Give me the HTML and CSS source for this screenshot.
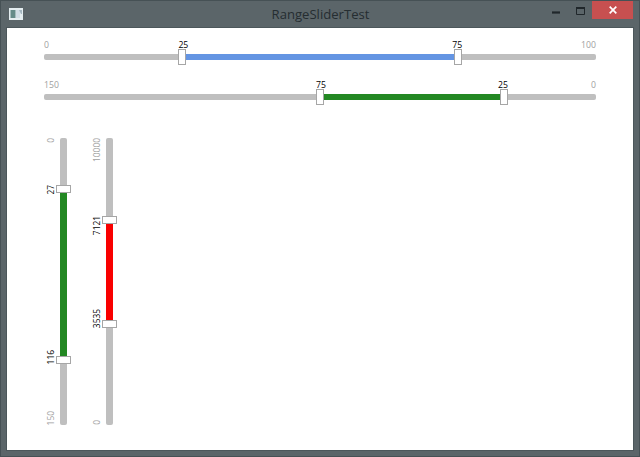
FILE: index.html
```
<!DOCTYPE html>
<html lang="en">
<head>
<meta charset="utf-8">
<title>RangeSliderTest</title>
<link rel="stylesheet" href="styles.css">
</head>
<body>
<div class="window">
  <header class="titlebar">
    <svg class="app-icon" width="14" height="12" viewBox="0 0 14 12"><rect width="14" height="12" fill="#e4edf0"/><rect x="1.5" y="2" width="5" height="8" fill="#648b89"/><rect x="7" y="2" width="4" height="8" fill="#d0dde5"/><path d="M10 2h3v4h-1z" fill="#a5b7c1"/></svg>
    <h1 class="title"><span>RangeSliderTest</span></h1>
    <div class="buttons">
      <svg class="minimize" width="8" height="3" viewBox="0 0 8 3"><path d="M0 1.5h8" stroke="#20272b" stroke-width="2.2"/></svg>
      <svg class="maximize" width="9" height="8" viewBox="0 0 9 8"><path d="M.5 1v6.5h8V1" fill="none" stroke="#20272b"/><path d="M0 1h9" stroke="#20272b" stroke-width="2"/></svg>
      <div class="close"><svg width="8" height="8" viewBox="0 0 7 7"><path d="M.6.6l5.8 5.8M6.4.6L.6 6.4" stroke="#fff" stroke-width="1.5"/></svg></div>
    </div>
  </header>
  <main class="client">
    <section class="slider">
      <div class="limits"><span>0</span><span>100</span></div>
      <div class="track">
        <i class="seg start" style="flex-grow:134.5"></i><div class="thumb"><b class="value after">25</b></div>
        <i class="seg blue" style="flex-grow:268"></i><div class="thumb"><b class="value before">75</b></div>
        <i class="seg end" style="flex-grow:134"></i>
      </div>
    </section>
    <section class="slider">
      <div class="limits"><span>150</span><span>0</span></div>
      <div class="track">
        <i class="seg start" style="flex-grow:272"></i><div class="thumb"><b class="value after">75</b></div>
        <i class="seg green" style="flex-grow:176"></i><div class="thumb"><b class="value before">25</b></div>
        <i class="seg end" style="flex-grow:88"></i>
      </div>
    </section>
    <div class="columns">
      <section class="slider vertical">
        <div class="limits"><span>0</span><span>150</span></div>
        <div class="track">
          <i class="seg start" style="flex-grow:47"></i><div class="thumb"><b class="value after">27</b></div>
          <i class="seg green" style="flex-grow:163"></i><div class="thumb"><b class="value before">116</b></div>
          <i class="seg end" style="flex-grow:61"></i>
        </div>
      </section>
      <section class="slider vertical">
        <div class="limits"><span>10000</span><span>0</span></div>
        <div class="track">
          <i class="seg start" style="flex-grow:78"></i><div class="thumb"><b class="value after">7121</b></div>
          <i class="seg red" style="flex-grow:96"></i><div class="thumb"><b class="value before">3535</b></div>
          <i class="seg end" style="flex-grow:97"></i>
        </div>
      </section>
    </div>
  </main>
</div>
</body>
</html>
```
FILE: styles.css
```
* { box-sizing: border-box; }
body { margin: 0; font-family: "Open Sans", "Noto Sans", sans-serif; }
.window {
  width: 640px; height: 457px; padding: 0 6px 6px;
  background: #5b6569; border: 1px solid #465155;
  display: flex; flex-direction: column;
}
.titlebar { height: 27px; flex: none; display: flex; align-items: flex-start; }
.app-icon { margin: 7px 0 0 2px; }
.title {
  flex: 1; margin: 3px 0 0 69px; text-align: center;
  font-size: 13.1px; line-height: 20px; font-weight: 400; color: #252d31;
}
.buttons { width: 84px; display: flex; align-items: flex-start; }
.minimize { margin: 10px 0 0 3px; }
.maximize { margin: 6px 0 0 16px; }
.close {
  width: 41px; height: 18px; margin-left: auto; background: #c75050;
  display: flex; align-items: center; justify-content: center;
}
.client { flex: 1; background: #fff; padding: 12px 37px 0; box-shadow: 0 0 0 1px #4c575b; }
.slider { height: 40px; }
.limits {
  height: 9px; display: flex; justify-content: space-between;
  font-size: 8.7px; line-height: 10px; color: #a0a0a0;
}
.track { height: 16px; display: flex; align-items: center; }
.seg { flex: 1 1 0; height: 6px; background: #bfbfbf; }
.start { border-radius: 2px 0 0 2px; }
.end { border-radius: 0 2px 2px 0; }
.blue { background: #6495e3; }
.green { background: #238823; }
.red { background: #f90000; }
.thumb { position: relative; flex: none; width: 8px; height: 16px; background: #fff; border: 1px solid #a6a6a6; }
.value {
  position: absolute; bottom: 100%;
  font-size: 8.7px; line-height: 10px; font-weight: 400; color: #000;
}
.after { left: -1px; }
.before { right: -1px; }
.columns { display: flex; gap: 20px; height: 287px; margin: 18px 0 0 2px; }
.vertical { display: flex; width: 26px; height: 287px; }
.vertical .limits { width: 10px; height: 287px; flex-direction: column; }
.vertical .limits span, .vertical .value { writing-mode: vertical-rl; transform: rotate(180deg); }
.vertical .limits, .vertical .value { font-size: 8.4px; }
.vertical .track { width: 15px; height: 287px; flex-direction: column; }
.vertical .seg { width: 7px; height: auto; }
.vertical .start { border-radius: 2px 2px 0 0; }
.vertical .end { border-radius: 0 0 2px 2px; }
.vertical .thumb { width: 15px; height: 8px; }
.vertical .value { right: 100%; left: auto; margin: 0 1px 0 0; }
.vertical .after { top: -1px; bottom: auto; }
.vertical .before { bottom: -1px; }
```
